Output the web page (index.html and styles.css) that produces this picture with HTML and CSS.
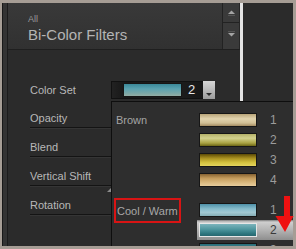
FILE: index.html
```html
<!DOCTYPE html>
<html lang="en">
<head>
    <meta charset="UTF-8">
    <meta name="viewport" content="width=device-width, initial-scale=1.0">
    <title>Bi-Color Filters</title>
    <link rel="stylesheet" href="styles.css">
</head>
<body>
    <div class="window">
        <div class="edge"></div>
        <div class="panel">
            <div class="header">
                <div class="title">
                    <div class="crumb">All</div>
                    <div class="name">Bi-Color Filters</div>
                </div>
                <div class="scroller">
                    <div class="scroll up">
                        <svg width="9" height="7" viewBox="0 0 9 7"><path d="M1 5 L4.5 1.5 L8 5 Z" fill="#a4a4a4"/><rect x="1" y="6" width="7" height="1" fill="#555"/></svg>
                    </div>
                    <div class="scroll down">
                        <svg width="9" height="7" viewBox="0 0 9 7"><rect x="1" y="0" width="7" height="1" fill="#555"/><path d="M1 2 L8 2 L4.5 5.5 Z" fill="#a4a4a4"/></svg>
                    </div>
                </div>
            </div>
            <div class="props">
                <div class="prop first">
                    <span class="label">Color Set</span>
                    <div class="picker">
                        <span class="swatch teal"></span>
                        <span class="picker-num">2</span>
                        <span class="picker-btn">
                            <svg width="12" height="18" viewBox="0 0 12 18"><path d="M3 12 L9 12 L6 15 Z" fill="#2a2a2a"/></svg>
                        </span>
                    </div>
                </div>
                <div class="prop"><span class="label">Opacity</span></div>
                <div class="prop"><span class="label">Blend</span></div>
                <div class="prop"><span class="label">Vertical Shift</span></div>
                <div class="prop"><span class="label">Rotation</span></div>
            </div>
        </div>
        <div class="divider"></div>
        <div class="side"></div>

        <span class="grip"></span>

        <div class="popup">
            <div class="group">
                <div class="group-name">Brown</div>
                <div class="items">
                    <div class="item"><span class="swatch brown1"></span><span class="num">1</span></div>
                    <div class="item"><span class="swatch brown2"></span><span class="num">2</span></div>
                    <div class="item"><span class="swatch brown3"></span><span class="num">3</span></div>
                    <div class="item"><span class="swatch brown4"></span><span class="num">4</span></div>
                </div>
            </div>
            <div class="group">
                <div class="group-name"><span class="marked">Cool / Warm</span></div>
                <div class="items">
                    <div class="item"><span class="swatch cool1"></span><span class="num">1</span></div>
                    <div class="item selected"><span class="swatch cool2"></span><span class="num">2</span></div>
                    <div class="item"><span class="swatch cool3"></span><span class="num">3</span></div>
                </div>
            </div>
        </div>

        <svg class="arrow" width="22" height="40" viewBox="0 0 22 40">
            <rect x="10" y="2" width="6" height="22" fill="#ee1111"/>
            <path d="M1.5 22 L19.5 22 L11 38 Z" fill="#ee1111"/>
        </svg>
    </div>
</body>
</html>
```

FILE: styles.css
```css
body {
    margin: 0;
    background: #a69d95;
    font-family: "Liberation Sans", Arial, sans-serif;
    overflow: hidden;
}
.window {
    position: relative;
    display: flex;
    margin: 3px 3px 0 2px;
    height: 243px;
    background: #2b2b2b;
}
.edge {
    width: 4px;
    background: #333;
    border-left: 1px solid #181818;
    border-right: 1px solid #1c1c1c;
}
.panel {
    width: 232px;
    background: #2b2b2b;
}
.header {
    display: flex;
    height: 46px;
    background: linear-gradient(#393939, #313131);
    border-bottom: 1px solid #1f1f1f;
}
.title {
    flex: 1;
    padding: 11px 0 0 20px;
}
.crumb {
    font-size: 9px;
    line-height: 10px;
    color: #9a9a9a;
}
.name {
    margin-top: 2px;
    font-size: 15px;
    line-height: 17px;
    color: #b4b4b4;
}
.scroller {
    width: 16px;
    border-left: 1px solid #222;
    border-right: 1px solid #262626;
}
.scroll {
    display: flex;
    justify-content: center;
    align-items: center;
    background: #3a3a3a;
}
.scroll.up {
    height: 19px;
    border-bottom: 1px solid #222;
    align-items: flex-start;
    padding-top: 0;
}
.scroll.up svg {
    margin-top: 6px;
}
.scroll.down {
    height: 26px;
    align-items: flex-start;
}
.scroll.down svg {
    margin-top: 8px;
}
.props {
    padding: 20px 0 0 22px;
}
.prop {
    display: flex;
    padding: 12px 0 2px;
    border-bottom: 1px solid #141414;
    box-shadow: 0 1px 0 #353535;
    font-size: 11px;
    line-height: 14px;
    color: #b8b8b8;
}
.prop.first {
    padding: 11px 0 0;
    height: 18px;
    align-items: center;
    border-bottom: none;
    box-shadow: none;
}
.label {
    width: 81px;
    flex-shrink: 0;
}
.picker {
    display: flex;
    align-items: center;
    width: 104px;
    height: 18px;
    box-sizing: border-box;
    padding-left: 11px;
    background: linear-gradient(90deg, #222 0, #181818 12px, #1e1e1e 60%, #141414);
    border: 1px solid #111;
}
.picker-num {
    margin-left: 6px;
    font-size: 13px;
    color: #e6e6e6;
}
.picker-btn {
    margin-left: auto;
    width: 12px;
    height: 18px;
    margin-right: -1px;
    background: linear-gradient(#d6d6d6, #b4b4b4 60%, #9c9c9c);
}
.picker-btn svg {
    display: block;
}
.divider {
    width: 3px;
    background: #e4e4e4;
}
.side {
    flex: 1;
    background: #2b2b2b;
}
.grip {
    position: absolute;
    left: 105px;
    top: 185px;
    width: 0;
    height: 0;
    border-left: 4px solid transparent;
    border-bottom: 4px solid #8a8a8a;
}
.popup {
    position: absolute;
    left: 109px;
    top: 98px;
    right: 0;
    bottom: 0;
    padding-top: 8px;
    background: #2e2e2e;
    border-top: 1px solid #0e0e0e;
    border-left: 1px solid #0e0e0e;
    overflow: hidden;
}
.group {
    display: flex;
}
.group + .group {
    margin-top: 10px;
}
.group-name {
    width: 81px;
    height: 20px;
    padding-left: 4px;
    display: flex;
    align-items: center;
    font-size: 11px;
    line-height: 14px;
    color: #a4a4a4;
}
.marked {
    margin-left: -2px;
    padding: 4px 1px 3px 1px;
    border: 2px solid #d81414;
    color: #a8a8a8;
}
.items {
    flex: 1;
}
.item {
    display: flex;
    align-items: center;
    height: 20px;
    padding-left: 2px;
}
.item.selected {
    background: linear-gradient(#7c7c7c 0, #cfcfcf 2px, #b4b4b4 50%, #8e8e8e);
}
.num {
    margin-left: 13px;
    font-size: 12px;
    color: #9c9c9c;
}
.item.selected .num {
    color: #3a3a3a;
}
.swatch {
    display: block;
    width: 58px;
    height: 14px;
    box-sizing: border-box;
    border: 1px solid #161616;
}
.swatch.teal {
    width: 59px;
    background: linear-gradient(#3a8898, #5aa2b0 40%, #7ea8a6 80%, #94ada4);
}
.brown1 {
    background: linear-gradient(#b8a478, #e2d4ae 40%, #d2c096 75%, #a48c62);
}
.brown2 {
    background: linear-gradient(#b4b068, #d4d28e 35%, #aaa444 75%, #6c6616);
}
.brown3 {
    background: linear-gradient(#5c4a06, #a89020 35%, #d4c23e 70%, #e4d45e);
}
.brown4 {
    background: linear-gradient(#866232, #c49c5c 35%, #dcbc84 75%, #e6cc9c);
}
.cool1 {
    background: linear-gradient(#4e90a8, #86bccc 40%, #a2c8d2 70%, #86aeb6);
}
.cool2 {
    border-color: #e6e6e6;
    background: linear-gradient(#7cb4bc, #4e969e 45%, #2e767e 80%, #286870);
}
.cool3 {
    background: linear-gradient(#2a6e78, #4a949c 50%, #6aa8b0);
}
.arrow {
    position: absolute;
    left: 272px;
    top: 191px;
}
```
